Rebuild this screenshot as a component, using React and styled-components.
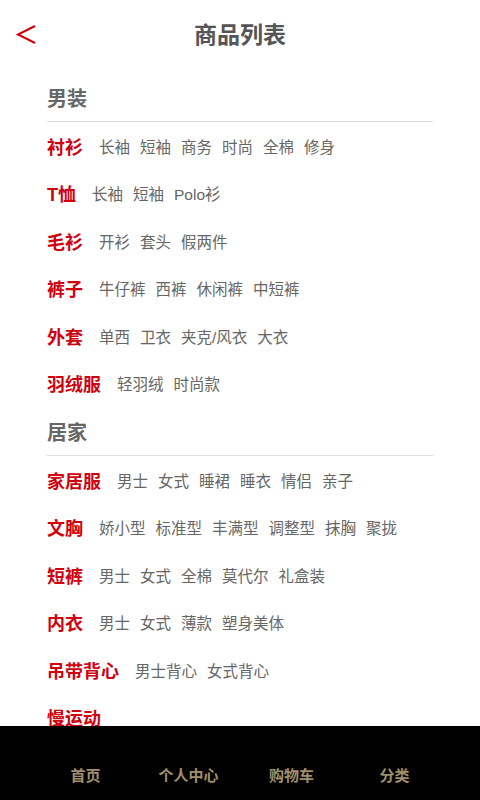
import React from 'react'
import styled, { createGlobalStyle } from 'styled-components'

const GlobalStyle = createGlobalStyle`
  html, body {
    margin: 0;
    padding: 0;
    background: #fff;
    font-family: "Liberation Sans", "Noto Sans CJK SC", sans-serif;
  }
`

const Page = styled.div`
  display: flex;
  flex-direction: column;
  height: 100vh;
  overflow: hidden;
`

const Header = styled.div`
  position: relative;
  height: 69px;
  display: flex;
  align-items: center;
  justify-content: center;
  flex-shrink: 0;
`

const BackButton = styled.button`
  position: absolute;
  left: 12px;
  top: 20px;
  width: 28px;
  height: 28px;
  padding: 0;
  border: none;
  background: none;
  display: flex;
  align-items: center;
  justify-content: center;
`

const Title = styled.h1`
  margin: 0 0 3px 0;
  font-size: 23px;
  font-weight: bold;
  color: #555;
`

const List = styled.div`
  flex: 1;
  overflow: hidden;
  padding: 4px 47px 0;
`

const SectionTitle = styled.div`
  height: 48px;
  display: flex;
  align-items: center;
  border-bottom: 1px solid #ddd;
  font-size: 20px;
  font-weight: bold;
  color: #666;
`

const Row = styled.div`
  height: 47.5px;
  display: flex;
  align-items: center;
  gap: 10px;
  white-space: nowrap;
`

const Label = styled.span`
  font-size: 18px;
  font-weight: bold;
  color: #d0000f;
  margin-right: 6px;
`

const Item = styled.span`
  font-size: 15.5px;
  color: #666;
`

const TabBar = styled.div`
  height: 74px;
  flex-shrink: 0;
  background: #000;
  display: grid;
  grid-template-columns: repeat(4, 1fr);
  padding: 38px 34px 0;
  box-sizing: border-box;
`

const Tab = styled.div`
  text-align: center;
  line-height: 24px;
  font-size: 15px;
  font-weight: bold;
  color: #a08f6a;
`

const sections = [
  {
    title: '男装',
    rows: [
      { label: '衬衫', items: ['长袖', '短袖', '商务', '时尚', '全棉', '修身'] },
      { label: 'T恤', items: ['长袖', '短袖', 'Polo衫'] },
      { label: '毛衫', items: ['开衫', '套头', '假两件'] },
      { label: '裤子', items: ['牛仔裤', '西裤', '休闲裤', '中短裤'] },
      { label: '外套', items: ['单西', '卫衣', '夹克/风衣', '大衣'] },
      { label: '羽绒服', items: ['轻羽绒', '时尚款'] },
    ],
  },
  {
    title: '居家',
    rows: [
      { label: '家居服', items: ['男士', '女式', '睡裙', '睡衣', '情侣', '亲子'] },
      { label: '文胸', items: ['娇小型', '标准型', '丰满型', '调整型', '抹胸', '聚拢'] },
      { label: '短裤', items: ['男士', '女式', '全棉', '莫代尔', '礼盒装'] },
      { label: '内衣', items: ['男士', '女式', '薄款', '塑身美体'] },
      { label: '吊带背心', items: ['男士背心', '女式背心'] },
      { label: '慢运动', items: [] },
    ],
  },
]

const tabs = ['首页', '个人中心', '购物车', '分类']

export default function App() {
  return (
    <Page>
      <GlobalStyle />
      <Header>
        <BackButton>
          <svg width="24" height="24" viewBox="0 0 24 24">
            <polyline points="21,4 4,12.5 21,21" fill="none" stroke="#d0000f" strokeWidth="2" />
          </svg>
        </BackButton>
        <Title>商品列表</Title>
      </Header>
      <List>
        {sections.map((section) => (
          <div key={section.title}>
            <SectionTitle>{section.title}</SectionTitle>
            {section.rows.map((row) => (
              <Row key={row.label}>
                <Label>{row.label}</Label>
                {row.items.map((item, i) => (
                  <Item key={i}>{item}</Item>
                ))}
              </Row>
            ))}
          </div>
        ))}
      </List>
      <TabBar>
        {tabs.map((t) => (
          <Tab key={t}>{t}</Tab>
        ))}
      </TabBar>
    </Page>
  )
}
